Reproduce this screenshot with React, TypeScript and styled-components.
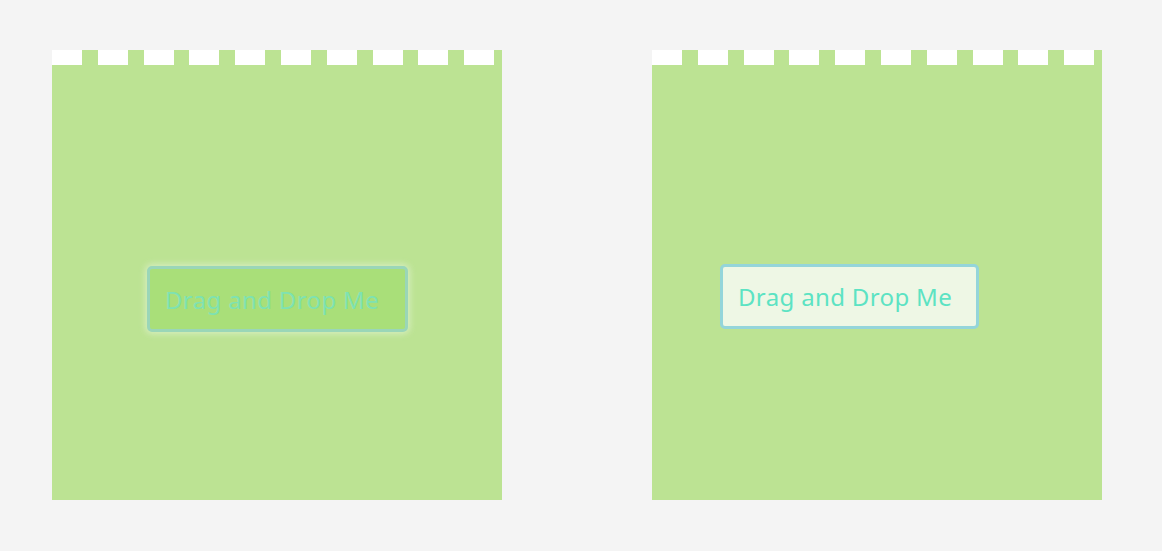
import * as React from "react";
import styled, { createGlobalStyle } from "styled-components";

const GlobalStyle = createGlobalStyle`
  body {
    margin: 0;
    background: #f4f4f4;
    font-family: "Noto Sans", "Open Sans", sans-serif;
  }
`;

const Page = styled.div`
  display: flex;
  gap: 150px;
  padding: 50px 52px;
`;

const DropZone = styled.div`
  display: flex;
  flex-direction: column;
  width: 450px;
  height: 450px;
  background: #bce393;
`;

const Perforation = styled.div`
  height: 15px;
  flex-shrink: 0;
  background: repeating-linear-gradient(
    to right,
    #ffffff 0 30px,
    transparent 30px 45.8px
  );
`;

const Field = styled.div`
  position: relative;
  flex: 1;
`;

const Card = styled.div<{ $dragging?: boolean; $x: number; $y: number }>`
  position: absolute;
  left: ${(p) => p.$x}px;
  top: ${(p) => p.$y}px;
  box-sizing: border-box;
  width: ${(p) => (p.$dragging ? 261 : 259)}px;
  height: ${(p) => (p.$dragging ? 66 : 65)}px;
  display: flex;
  align-items: center;
  padding: 0 15px;
  border-radius: 5px;
  border: 3px solid ${(p) => (p.$dragging ? "#9ad6b8" : "#94d5da")};
  background: ${(p) => (p.$dragging ? "#a9df79" : "#eef7e5")};
  color: ${(p) => (p.$dragging ? "#7ee2b2" : "#5ce3c3")};
  font-size: 24px;
  letter-spacing: 0.35px;
  white-space: nowrap;
  box-shadow: ${(p) => (p.$dragging ? "0 0 6px 2px rgba(220, 240, 200, 0.8)" : "none")};
  cursor: grab;
`;

export default function App() {
  return (
    <>
      <GlobalStyle />
      <Page>
        <DropZone>
          <Perforation />
          <Field>
            <Card $dragging $x={95} $y={201}>
              Drag and Drop Me
            </Card>
          </Field>
        </DropZone>
        <DropZone>
          <Perforation />
          <Field>
            <Card $x={68} $y={199}>
              Drag and Drop Me
            </Card>
          </Field>
        </DropZone>
      </Page>
    </>
  );
}
